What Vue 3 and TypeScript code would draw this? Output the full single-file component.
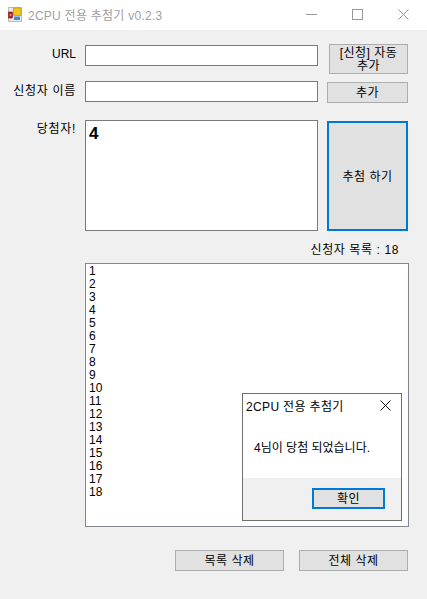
<template>
  <div class="window">
    <div class="titlebar">
      <svg class="app-icon" width="14" height="15" viewBox="0 0 14 15">
        <rect x="0.5" y="0.5" width="13" height="14" fill="#e9e9e9" stroke="#bdbdbd" />
        <rect x="0.5" y="5" width="4" height="6" fill="#b82020" stroke="#8a1515" stroke-width="0.6" />
        <rect x="1.7" y="7" width="1.6" height="2" fill="#f08a8a" />
        <rect x="5.5" y="1" width="7.5" height="7.5" fill="#f2c420" stroke="#b08a10" stroke-width="0.6" />
        <rect x="6" y="9.5" width="6" height="3.5" fill="#3f8be0" />
      </svg>
      <span class="title-text">2CPU 전용 추첨기 v0.2.3</span>
      <div class="win-controls">
        <svg width="11" height="11" viewBox="0 0 11 11"><path d="M0 5.5H11" stroke="#999" fill="none" /></svg>
        <svg width="11" height="11" viewBox="0 0 11 11"><rect x="0.5" y="0.5" width="10" height="10" stroke="#999" fill="none" /></svg>
        <svg width="11" height="11" viewBox="0 0 11 11"><path d="M0.5 0.5L10.5 10.5M10.5 0.5L0.5 10.5" stroke="#999" fill="none" /></svg>
      </div>
    </div>

    <div class="content">
      <div class="row row-url">
        <label class="field-label">URL</label>
        <input class="field" type="text" />
        <button class="btn btn-auto">[신청] 자동<br />추가</button>
      </div>

      <div class="row row-name">
        <label class="field-label">신청자 이름</label>
        <input class="field" type="text" />
        <button class="btn btn-add">추가</button>
      </div>

      <div class="row row-winner">
        <label class="field-label">당첨자!</label>
        <div class="winner-box">{{ winner }}</div>
        <button class="btn btn-draw">추첨 하기</button>
      </div>

      <div class="count">신청자 목록 : {{ applicants.length }}</div>

      <div class="list">
        <div v-for="item in applicants" :key="item" class="list-item">{{ item }}</div>
      </div>

      <div class="actions">
        <button class="btn btn-bottom">목록 삭제</button>
        <button class="btn btn-bottom">전체 삭제</button>
      </div>
    </div>

    <!-- Message box -->
    <div class="dialog">
      <div class="dialog-body">
        <div class="dialog-head">
          <span>2CPU 전용 추첨기</span>
          <svg width="11" height="11" viewBox="0 0 11 11"><path d="M0.5 0.5L10.5 10.5M10.5 0.5L0.5 10.5" stroke="#111" fill="none" /></svg>
        </div>
        <p class="dialog-msg">{{ winner }}님이 당첨 되었습니다.</p>
      </div>
      <div class="dialog-foot">
        <button class="btn btn-ok">확인</button>
      </div>
    </div>
  </div>
</template>

<script setup lang="ts">
const winner = 4
const applicants: number[] = Array.from({ length: 18 }, (_, i) => i + 1)
</script>

<style>
html,
body {
  margin: 0;
  background: #f0f0f0;
}
</style>

<style scoped>
.window {
  position: relative;
  width: 427px;
  height: 599px;
  overflow: hidden;
  background: #f0f0f0;
  color: #000;
  font-family: "Liberation Sans", "Noto Sans CJK KR", sans-serif;
  font-size: 12px;
}

.titlebar {
  display: flex;
  align-items: center;
  height: 30px;
  padding: 0 18px 0 8px;
  box-sizing: border-box;
  background: #fff;
}

.app-icon {
  margin-right: 6px;
  margin-top: -1px;
}

.title-text {
  color: #a0a0a0;
  font-size: 12px;
  letter-spacing: 0.25px;
  margin-top: -1px;
}

.win-controls {
  display: flex;
  gap: 35px;
  margin-left: auto;
  margin-top: -2px;
}

.content {
  display: flex;
  flex-direction: column;
  padding: 14px 19px 0 0;
}

.row {
  display: flex;
  align-items: flex-start;
}

.row-url {
  height: 30px;
}

.row-name {
  height: 22px;
  margin-top: 7px;
}

.row-winner {
  height: 111px;
  margin-top: 17px;
}

.field-label {
  width: 76px;
  flex: none;
  text-align: right;
  line-height: 16px;
  letter-spacing: 0.7px;
  white-space: nowrap;
}

.row-url .field-label {
  margin-top: 2px;
  letter-spacing: 0;
}

.row-name .field-label {
  margin-top: 2px;
}

.row-winner .field-label {
  margin-top: 1px;
}

.field,
.winner-box {
  width: 233px;
  margin-left: 9px;
  padding: 0;
  box-sizing: border-box;
  flex: none;
  background: #fff;
  border: 1px solid #7a7a7a;
  border-radius: 0;
  outline: none;
}

.field {
  height: 21px;
}

.row-url .field {
  margin-top: 1px;
}

.row-name .field {
  margin-top: 0;
}

.winner-box {
  height: 111px;
  padding: 2px 3px;
  font-size: 17px;
  font-weight: 700;
  line-height: 21px;
  color: #000;
}

.btn {
  padding: 0;
  box-sizing: border-box;
  background: #e1e1e1;
  border: 1px solid #adadad;
  border-radius: 0;
  color: #000;
  font-family: inherit;
  font-size: 12px;
  line-height: 12px;
  letter-spacing: 0.5px;
}

.btn-auto {
  width: 79px;
  height: 30px;
  margin-left: 11px;
  padding-top: 1px;
  line-height: 13px;
}

.btn-add {
  width: 81px;
  height: 21px;
  margin-left: 9px;
  margin-top: 1px;
}

.btn-draw {
  width: 81px;
  height: 110px;
  margin-left: 9px;
  margin-top: 1px;
  padding-top: 2px;
  border: 2px solid #0078d7;
}

.count {
  height: 13px;
  margin-top: 13px;
  padding-right: 9px;
  text-align: right;
  line-height: 13px;
  letter-spacing: 0.6px;
}

.list {
  height: 264px;
  margin-top: 6px;
  margin-left: 85px;
  width: 324px;
  padding: 1px 3px;
  box-sizing: border-box;
  background: #fff;
  border: 1px solid #82878f;
}

.list-item {
  height: 13px;
  line-height: 13px;
}

.actions {
  display: flex;
  justify-content: flex-end;
  gap: 15px;
  margin-top: 23px;
}

.btn-bottom {
  width: 109px;
  height: 21px;
}

.dialog {
  position: absolute;
  left: 242px;
  top: 393px;
  display: flex;
  flex-direction: column;
  width: 160px;
  height: 128px;
  box-sizing: border-box;
  background: #f0f0f0;
  border: 1px solid #6f6f6f;
}

.dialog-body {
  height: 84px;
  background: #fff;
}

.dialog-head {
  display: flex;
  align-items: center;
  justify-content: space-between;
  height: 23px;
  padding: 0 10px 0 3px;
  letter-spacing: 0.35px;
}

.dialog-msg {
  margin: 24px 0 0 11px;
  font-size: 12px;
  line-height: 14px;
}

.dialog-foot {
  display: flex;
  justify-content: flex-end;
  padding: 10px 16px 0 0;
}

.btn-ok {
  width: 73px;
  height: 21px;
  border: 2px solid #0078d7;
}
</style>
